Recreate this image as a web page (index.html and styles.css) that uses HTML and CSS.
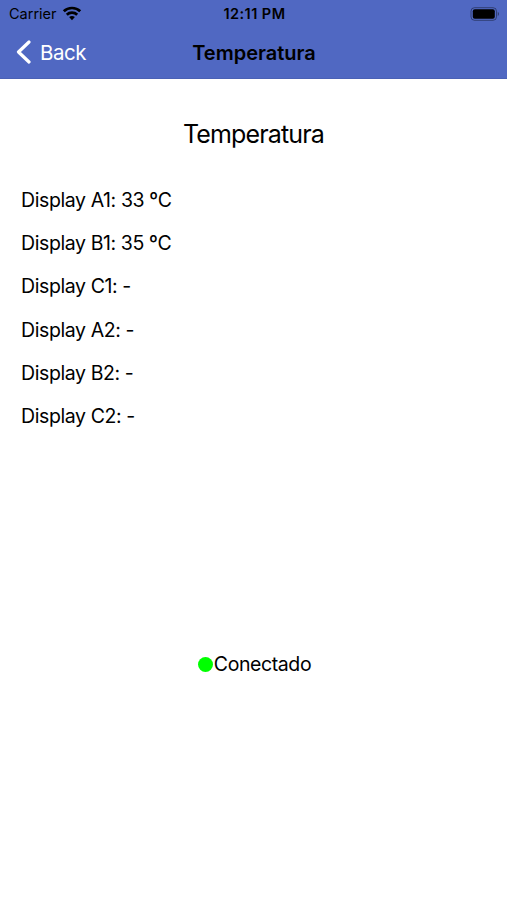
FILE: index.html
```html
<!DOCTYPE html>
<html lang="pt">
<head>
<meta charset="utf-8">
<title>Temperatura</title>
<link rel="stylesheet" href="styles.css">
</head>
<body>
<header class="top">
  <div class="status">
    <div class="carrier"><span>Carrier</span>
      <svg width="20" height="15" viewBox="0 0 20 15"><g fill="none" stroke="#000" stroke-width="2.7"><path d="M1.8 5.3C6.2.9 13.8.9 18.2 5.3"/><path d="M4.8 8.7C7.6 5.9 12.4 5.9 15.2 8.7"/></g><path d="M7.1 11.1Q10 8.7 12.9 11.1L10 14.2Z"/></svg>
    </div>
    <div class="time">12:11 PM</div>
    <div class="power"><svg width="30" height="14" viewBox="0 0 30 14"><rect x="1" y=".7" width="25.5" height="12.6" rx="3.5" fill="none" stroke="#000" stroke-opacity=".4"/><rect x="2.8" y="2.3" width="22" height="9.4" rx="2"/><path d="M27.8 4.8Q30 7 27.8 9.2Z" fill-opacity=".5"/></svg></div>
  </div>
  <nav class="nav">
    <a class="back"><svg width="15" height="24" viewBox="0 0 15 24"><path d="M13 2L2.5 12L13 22" fill="none" stroke="#fff" stroke-width="3.2" stroke-linecap="round" stroke-linejoin="round"/></svg><span>Back</span></a>
    <span class="nav-title">Temperatura</span>
  </nav>
</header>
<main>
  <h1 class="title">Temperatura</h1>
  <ul class="list">
    <li>Display A1: 33 <span class="unit">º</span>C</li>
    <li>Display B1: 35 <span class="unit">º</span>C</li>
    <li>Display C1: -</li>
    <li>Display A2: -</li>
    <li>Display B2: -</li>
    <li>Display C2: -</li>
  </ul>
  <div class="connection"><span class="dot"></span><span>Conectado</span></div>
</main>
</body>
</html>
```
FILE: styles.css
```css
* { box-sizing: border-box; }
body { margin: 0; height: 900px; background: #fff; color: #000; font-family: Inter, sans-serif; overflow: hidden; }
.top { height: 79px; background: #5068c2; border-bottom: 1px solid #4a61b5; }
.status { height: 27px; display: grid; grid-template-columns: 1fr 1fr 1fr; align-items: center; padding: 0 7px 0 9px; }
.carrier { display: flex; align-items: center; gap: 5px; font-size: 14.5px; }
.carrier svg { margin-top: -1px; }
.time { text-align: center; font-size: 14.5px; font-weight: 600; letter-spacing: .45px; }
.power { display: flex; justify-content: flex-end; }
.nav { height: 50px; display: grid; grid-template-columns: 1fr auto 1fr; align-items: center; padding: 0 15px 0 16px; }
.back { display: flex; align-items: center; gap: 9px; color: #fff; font-size: 20.5px; letter-spacing: -.5px; }
.nav-title { padding-top: 1px; font-size: 20px; font-weight: 600; }
.title { margin: 38px 0 0; height: 34px; line-height: 34px; font-size: 25px; font-weight: 400; text-align: center; letter-spacing: -.85px; }
.list { list-style: none; margin: 28px 0 0; padding: 0 21px; font-size: 19.5px; letter-spacing: -.4px; }
.list li { height: 43.2px; line-height: 43.2px; }
.unit { position: relative; top: -1px; }
.connection { margin-top: 213px; padding-left: 2px; height: 26px; display: flex; align-items: center; justify-content: center; gap: 1px; font-size: 19.5px; letter-spacing: -.4px; }
.dot { width: 15px; height: 15px; border-radius: 50%; background: #0f0; }
```
